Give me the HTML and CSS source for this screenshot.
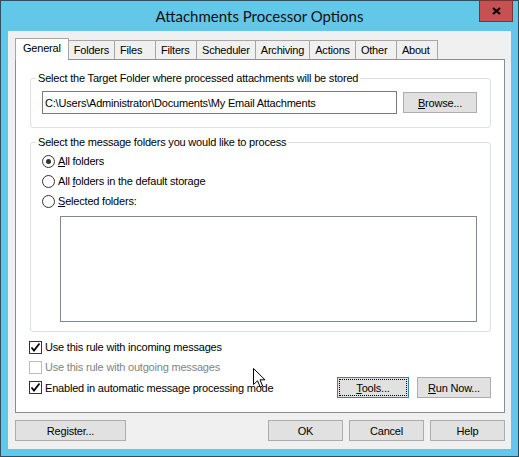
FILE: index.html
```html
<!DOCTYPE html>
<html lang="en">
<head>
  <meta charset="UTF-8">
  <title>Attachments Processor Options</title>
  <link rel="stylesheet" href="styles.css">
</head>
<body>
  <div class="window">
    <div class="titlebar">
      <span></span>
      <h1 class="title">Attachments Processor Options</h1>
      <button class="close" aria-label="Close">
        <svg width="9" height="8" viewBox="0 0 9 8"><path d="M1 1 L8 7 M8 1 L1 7" stroke="#000" stroke-width="2.2" fill="none"/></svg>
      </button>
    </div>

    <div class="client">
      <!-- Tabs -->
      <ul class="tabs">
        <li class="tab active">General</li>
        <li class="tab">Folders</li>
        <li class="tab">Files</li>
        <li class="tab">Filters</li>
        <li class="tab">Scheduler</li>
        <li class="tab">Archiving</li>
        <li class="tab">Actions</li>
        <li class="tab">Other</li>
        <li class="tab">About</li>
      </ul>

      <div class="panel">
        <!-- Target folder -->
        <fieldset class="group">
          <legend>Select the Target Folder where processed attachments will be stored</legend>
          <div class="path-row">
            <input class="path" type="text" value="C:\Users\Administrator\Documents\My Email Attachments">
            <button class="btn btn-browse"><u>B</u>rowse...</button>
          </div>
        </fieldset>

        <!-- Message folders -->
        <fieldset class="group group-folders">
          <legend>Select the message folders you would like to process</legend>
          <label class="radio-row"><span class="radio checked"></span><span><u>A</u>ll folders</span></label>
          <label class="radio-row"><span class="radio"></span><span>All <u>f</u>olders in the default storage</span></label>
          <label class="radio-row"><span class="radio"></span><span><u>S</u>elected folders:</span></label>
          <div class="listbox"></div>
        </fieldset>

        <!-- Options -->
        <div class="options">
          <label class="check-row">
            <span class="check"><svg width="11" height="11" viewBox="0 0 11 11"><path d="M1.5 5.5 L4 8.5 L9.5 1.5" stroke="#000" stroke-width="1.8" fill="none"/></svg></span>
            <span>Use this rule with incoming messages</span>
          </label>
          <label class="check-row disabled">
            <span class="check"></span>
            <span>Use this rule with outgoing messages</span>
          </label>
          <div class="check-row last">
            <label class="check-label">
              <span class="check"><svg width="11" height="11" viewBox="0 0 11 11"><path d="M1.5 5.5 L4 8.5 L9.5 1.5" stroke="#000" stroke-width="1.8" fill="none"/></svg></span>
              <span>Enabled in automatic message processing mode</span>
            </label>
            <div class="actions">
              <button class="btn btn-tools focused"><u>T</u>ools...</button>
              <button class="btn btn-run"><u>R</u>un Now...</button>
            </div>
          </div>
        </div>
      </div>

      <div class="footer">
        <button class="btn btn-register">Register...</button>
        <div class="footer-right">
          <button class="btn">OK</button>
          <button class="btn">Cancel</button>
          <button class="btn">Help</button>
        </div>
      </div>
    </div>

    <!-- mouse pointer -->
    <svg class="cursor" width="13" height="20" viewBox="0 0 13 20">
      <path d="M0.5 0.5 L0.5 16.5 L4.5 12.8 L7.2 19 L9.6 18 L7 11.8 L12 11.8 Z" fill="#fff" stroke="#000" stroke-width="1"/>
    </svg>
  </div>
</body>
</html>
```

FILE: styles.css
```css
* {
  box-sizing: border-box;
}

body {
  margin: 0;
  font-family: "Liberation Sans", Arial, sans-serif;
  font-size: 11px;
  letter-spacing: -0.2px;
  color: #000;
}

.window {
  position: relative;
  width: 519px;
  height: 457px;
  background: #63c7e9;
  border: 1px solid #2f4f5c;
}

/* Title bar */
.titlebar {
  height: 30px;
  display: grid;
  grid-template-columns: 1fr auto 1fr;
}

.title {
  margin: 0;
  font-family: Lato, sans-serif;
  font-size: 15px;
  font-weight: normal;
  letter-spacing: 0;
  line-height: 30px;
  color: #111;
}

.close {
  justify-self: end;
  width: 34px;
  height: 22px;
  margin: -1px 5px 0 0;
  padding: 0;
  background: #c75050;
  border: 1px solid #7a3434;
  display: flex;
  align-items: center;
  justify-content: center;
}

/* Client area */
.client {
  height: 418px;
  margin: 0 7px;
  padding: 7px 6px 8px 7px;
  background: #f0f0f0;
}

.tabs {
  display: flex;
  align-items: flex-end;
  list-style: none;
  margin: 0 0 -1px;
  padding: 0;
  position: relative;
  z-index: 1;
}

.tab {
  height: 20px;
  min-width: 42px;
  padding: 0 5px;
  margin-left: -1px;
  line-height: 19px;
  background: #f0f0f0;
  border: 1px solid #a6a6a6;
  border-bottom-color: #898c95;
}

.tab.active {
  height: 22px;
  margin-left: 0;
  padding: 0 7px;
  line-height: 18px;
  background: #fff;
  border-bottom: none;
}

.panel {
  background: #fff;
  border: 1px solid #898c95;
  padding: 0 13px 14px;
}

/* Group boxes */
.group {
  margin: 10px 0 0 1px;
  padding: 0 13px 13px 5px;
  min-width: 0;
  border: 1px solid #d9e0e6;
  border-radius: 3px;
}

.group legend {
  padding: 0 2px;
  line-height: 16px;
}

.path-row {
  display: flex;
  align-items: center;
  gap: 6px;
  margin: 5px 0 0 6px;
}

.path {
  flex: 1;
  height: 23px;
  padding: 0 2px;
  font: inherit;
  letter-spacing: inherit;
  color: #000;
  border: 1px solid #7a7a7a;
  background: #fff;
}

.group-folders {
  margin-top: 6px;
  padding-bottom: 9px;
}

.radio-row {
  display: flex;
  align-items: center;
  gap: 3px;
  height: 20px;
  margin-left: 6px;
}

.radio-row:first-of-type {
  margin-top: 1px;
}

.radio {
  position: relative;
  width: 13px;
  height: 13px;
  border: 1px solid #333;
  border-radius: 50%;
  background: #fff;
}

.radio.checked::after {
  content: "";
  position: absolute;
  left: 3px;
  top: 3px;
  width: 5px;
  height: 5px;
  border-radius: 50%;
  background: #333;
}

.listbox {
  height: 106px;
  margin: 5px 0 0 24px;
  border: 1px solid #828790;
  background: #fff;
}

/* Checkboxes */
.options {
  margin-top: 5px;
}

.check-row,
.check-label {
  display: flex;
  align-items: center;
  gap: 3px;
  height: 20px;
}

.check-row.last {
  height: 21px;
}

.check {
  width: 13px;
  height: 13px;
  border: 1px solid #333;
  background: #fff;
  display: flex;
  align-items: center;
  justify-content: center;
}

.check-row.disabled {
  color: #838383;
}

.check-row.disabled .check {
  border-color: #bcbcbc;
}

.actions {
  margin-left: auto;
  display: flex;
  gap: 8px;
}

/* Buttons */
.btn {
  height: 21px;
  width: 75px;
  padding: 0;
  font: inherit;
  letter-spacing: inherit;
  color: #000;
  background: #e1e1e1;
  border: 1px solid #adadad;
}

.btn-browse {
  width: 74px;
}

.btn-tools {
  width: 72px;
}

.btn-run {
  width: 74px;
}

.btn.focused {
  border-color: #3c7fb1;
  outline: 1px dotted #000;
  outline-offset: -3px;
}

.footer {
  display: flex;
  justify-content: space-between;
  margin-top: 7px;
}

.btn-register {
  width: 111px;
}

.footer-right {
  display: flex;
  gap: 6px;
}

.cursor {
  position: absolute;
  left: 252px;
  top: 367px;
}
```
